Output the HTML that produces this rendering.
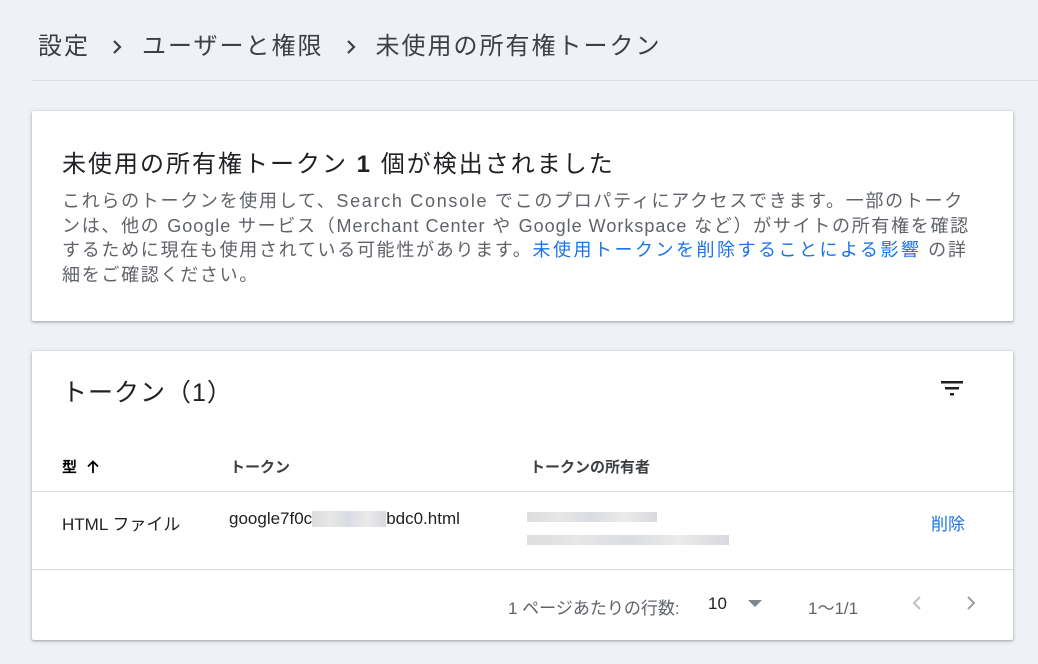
<!DOCTYPE html>
<html><head><meta charset="utf-8"><style>
body{margin:0;width:1038px;height:664px;background:#eef2f7;font-family:"Liberation Sans","Noto Sans CJK JP",sans-serif;color:#202124;overflow:hidden;position:relative}
.bc{position:absolute;left:38px;top:26px;font-size:24px;color:#3c4043;white-space:nowrap;letter-spacing:2px}
.bc svg{margin:0 20px 0 22px;vertical-align:-1px}
.hr{position:absolute;left:32px;right:0;top:80px;height:1px;background:#dadce0}
.card{position:absolute;left:32px;width:981px;background:#fff;box-shadow:0 1px 2px rgba(60,64,67,.3),0 1px 3px 1px rgba(60,64,67,.15);border-radius:2px}
.c1{top:111px;height:210px}
.c2{top:351px;height:289px}
.t1{position:absolute;left:30px;top:33px;font-size:24px;color:#202124;white-space:nowrap;letter-spacing:2px}
.p{position:absolute;left:30px;top:78px;font-size:18px;line-height:24.5px;color:#5f6368;white-space:nowrap;letter-spacing:1.7px}
.p .l{letter-spacing:1px}
.p a{color:#1a73e8;text-decoration:none;letter-spacing:2.5px}
.t2{position:absolute;left:30px;top:22px;font-size:25px;letter-spacing:1px}
.th{position:absolute;top:105px;font-size:15px;font-weight:bold;color:#3c4043}
.line{position:absolute;left:0;right:0;height:1px;background:#dadce0}
.td{position:absolute;top:159px;font-size:17px}
.blur{display:inline-block;height:16px;vertical-align:-3px;background:linear-gradient(90deg,#ddd,#e8e6e6,#d9dde3,#eceaea,#d8d9de)}
.ft{position:absolute;top:243px;font-size:17px;color:#5f6368}
</style></head><body>
<div class="bc">設定<svg width="10" height="16" viewBox="0 0 10 16"><path d="M2 2l6 6-6 6" stroke="#3c4043" stroke-width="2.2" fill="none"/></svg>ユーザーと権限<svg width="10" height="16" viewBox="0 0 10 16"><path d="M2 2l6 6-6 6" stroke="#3c4043" stroke-width="2.2" fill="none"/></svg>未使用の所有権トークン</div>
<div class="hr"></div>
<div class="card c1">
<div class="t1">未使用の所有権トークン <b>1</b> 個が検出されました</div>
<div class="p">これらのトークンを使用して、Search Console でこのプロパティにアクセスできます。一部のトーク<br>ンは、他の <span class="l">Google</span> サービス（<span class="l">Merchant Center</span> や <span class="l">Google Workspace</span> など）がサイトの所有権を確認<br>するために現在も使用されている可能性があります。<a>未使用トークンを削除することによる影響</a> の詳<br>細をご確認ください。</div>
</div>
<div class="card c2">
<div class="t2">トークン（1）</div>
<svg style="position:absolute;left:909px;top:30px" width="22" height="16" viewBox="0 0 22 16"><rect x="0" y="0" width="22" height="2.5" fill="#202124"/><rect x="4" y="6" width="14" height="2.5" fill="#202124"/><rect x="9" y="12" width="4" height="2.5" fill="#202124"/></svg>
<div class="th" style="left:30px;color:#000">型 <svg style="margin-left:6px;vertical-align:-1px" width="12" height="13" viewBox="0 0 12 13"><path d="M6 13V2M1 6.5L6 1.5l5 5" stroke="#000" stroke-width="1.8" fill="none"/></svg></div>
<div class="th" style="left:198px">トークン</div>
<div class="th" style="left:498px">トークンの所有者</div>
<div class="line" style="top:140px"></div>
<div class="td" style="left:30px">HTML ファイル</div>
<div class="td" style="left:197px;top:158px">google7f0c<span class="blur" style="width:74px"></span>bdc0.html</div>
<div style="position:absolute;left:495px;top:161px;width:130px;height:10px" class="blur"></div>
<div style="position:absolute;left:495px;top:184px;width:202px;height:10px" class="blur"></div>
<div class="td" style="left:899px;color:#1a73e8">削除</div>
<div class="line" style="top:218px"></div>
<div class="ft" style="left:476px">1 ページあたりの行数:</div>
<div class="ft" style="left:676px;color:#202124">10</div>
<div style="position:absolute;left:716px;top:249px;width:0;height:0;border-left:7px solid transparent;border-right:7px solid transparent;border-top:7px solid #80868b"></div>
<div class="ft" style="left:776px">1〜1/1</div>
<svg style="position:absolute;left:880px;top:244px" width="10" height="16" viewBox="0 0 10 16"><path d="M8 2L2 8l6 6" stroke="#bdc1c6" stroke-width="2" fill="none"/></svg>
<svg style="position:absolute;left:934px;top:244px" width="10" height="16" viewBox="0 0 10 16"><path d="M2 2l6 6-6 6" stroke="#9aa0a6" stroke-width="2" fill="none"/></svg>
</div>
</body></html>
